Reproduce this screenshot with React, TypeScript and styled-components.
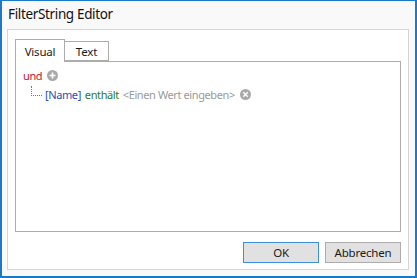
import styled, { createGlobalStyle } from "styled-components";

const Global = createGlobalStyle`
  html, body { margin: 0; padding: 0; background: #ffffff; }
  body { font-family: "Noto Sans", "Open Sans", sans-serif; }
`;

const PlusIcon = () => (
  <svg width="11" height="11" viewBox="0 0 11 11">
    <circle cx="5.5" cy="5.5" r="5.5" fill="#a9a9a9" />
    <path d="M5.5 2.5v6M2.5 5.5h6" stroke="#fff" strokeWidth="1.6" />
  </svg>
);

const RemoveIcon = () => (
  <svg width="11" height="11" viewBox="0 0 11 11">
    <circle cx="5.5" cy="5.5" r="5.5" fill="#a9a9a9" />
    <path d="M3.3 3.3l4.4 4.4M7.7 3.3l-4.4 4.4" stroke="#fff" strokeWidth="1.5" />
  </svg>
);

const App = () => {
  return (
    <>
      <Global />
      <Window>
        <TitleBar>FilterString Editor</TitleBar>
        <Panel>
          <TabStrip>
            <Tab active>Visual</Tab>
            <Tab>Text</Tab>
          </TabStrip>
          <TabBody>
            <Row>
              <Group>und</Group>
              <IconSlot>
                <PlusIcon />
              </IconSlot>
            </Row>
            <Row indent>
              <Connector />
              <Field>[Name]</Field>
              <Operation>enthält</Operation>
              <Placeholder>&lt;Einen Wert eingeben&gt;</Placeholder>
              <IconSlot>
                <RemoveIcon />
              </IconSlot>
            </Row>
          </TabBody>
          <Buttons>
            <Button primary>OK</Button>
            <Button>Abbrechen</Button>
          </Buttons>
        </Panel>
      </Window>
    </>
  );
};
export default App;

const Window = styled.div`
  width: 417px;
  height: 278px;
  box-sizing: border-box;
  border: 2px solid #1979ca;
  border-top-width: 1px;
  background: #f9f9f9;
  padding: 0 6px 6px 5px;
  display: flex;
  flex-direction: column;
`;

const TitleBar = styled.div`
  height: 29px;
  font-size: 13.5px;
  letter-spacing: -0.35px;
  color: #111111;
  padding-left: 1px;
  line-height: 29px;
  margin-top: -1px;
`;

const Panel = styled.div`
  flex: 1;
  background: #ffffff;
  border: 1px solid #d5d5d5;
  padding: 8px 7px 6px 7px;
  display: flex;
  flex-direction: column;
`;

const TabStrip = styled.div`
  display: flex;
  align-items: flex-end;
  height: 23px;
`;

const Tab = styled.div<{ active?: boolean }>`
  box-sizing: border-box;
  height: ${(p) => (p.active ? "23px" : "20px")};
  width: ${(p) => (p.active ? "50px" : "44px")};
  border: 1px solid #acacac;
  border-bottom: ${(p) => (p.active ? "none" : "1px solid #acacac")};
  border-left: ${(p) => (p.active ? "1px solid #acacac" : "none")};
  background: #ffffff;
  font-size: 11.5px;
  letter-spacing: -0.2px;
  color: #1a1a1a;
  display: flex;
  align-items: center;
  justify-content: center;
  position: relative;
  z-index: ${(p) => (p.active ? 1 : 0)};
  margin-bottom: ${(p) => (p.active ? "-1px" : "0")};
`;

const TabBody = styled.div`
  flex: 1;
  border: 1px solid #acacac;
  padding: 4px 7px;
  display: flex;
  flex-direction: column;
  gap: 1px;
`;

const Row = styled.div<{ indent?: boolean }>`
  display: flex;
  align-items: center;
  height: 18px;
  font-size: 11px;
  letter-spacing: -0.4px;
  padding-left: ${(p) => (p.indent ? "8px" : "0")};
`;

const Connector = styled.span`
  width: 10px;
  height: 9px;
  margin-top: -7px;
  margin-right: 3px;
  border-left: 1px dotted #7a7a7a;
  border-bottom: 1px dotted #7a7a7a;
`;

const Group = styled.span`
  color: #c8102e;
`;

const Field = styled.span`
  color: #1e4fc2;
`;

const Operation = styled.span`
  color: #2b7a2b;
  margin-left: 4px;
`;

const Placeholder = styled.span`
  color: #9a9a9a;
  margin-left: 4px;
`;

const IconSlot = styled.span`
  display: inline-flex;
  margin-left: 5px;
`;

const Buttons = styled.div`
  display: flex;
  justify-content: flex-end;
  gap: 6px;
  margin-top: 10px;
`;

const Button = styled.div<{ primary?: boolean }>`
  box-sizing: border-box;
  width: 76px;
  height: 21px;
  background: #e1e1e1;
  border: 1px solid ${(p) => (p.primary ? "#3c8fe0" : "#adadad")};
  font-size: 11.5px;
  letter-spacing: -0.2px;
  color: #1a1a1a;
  display: flex;
  align-items: center;
  justify-content: center;
`;
